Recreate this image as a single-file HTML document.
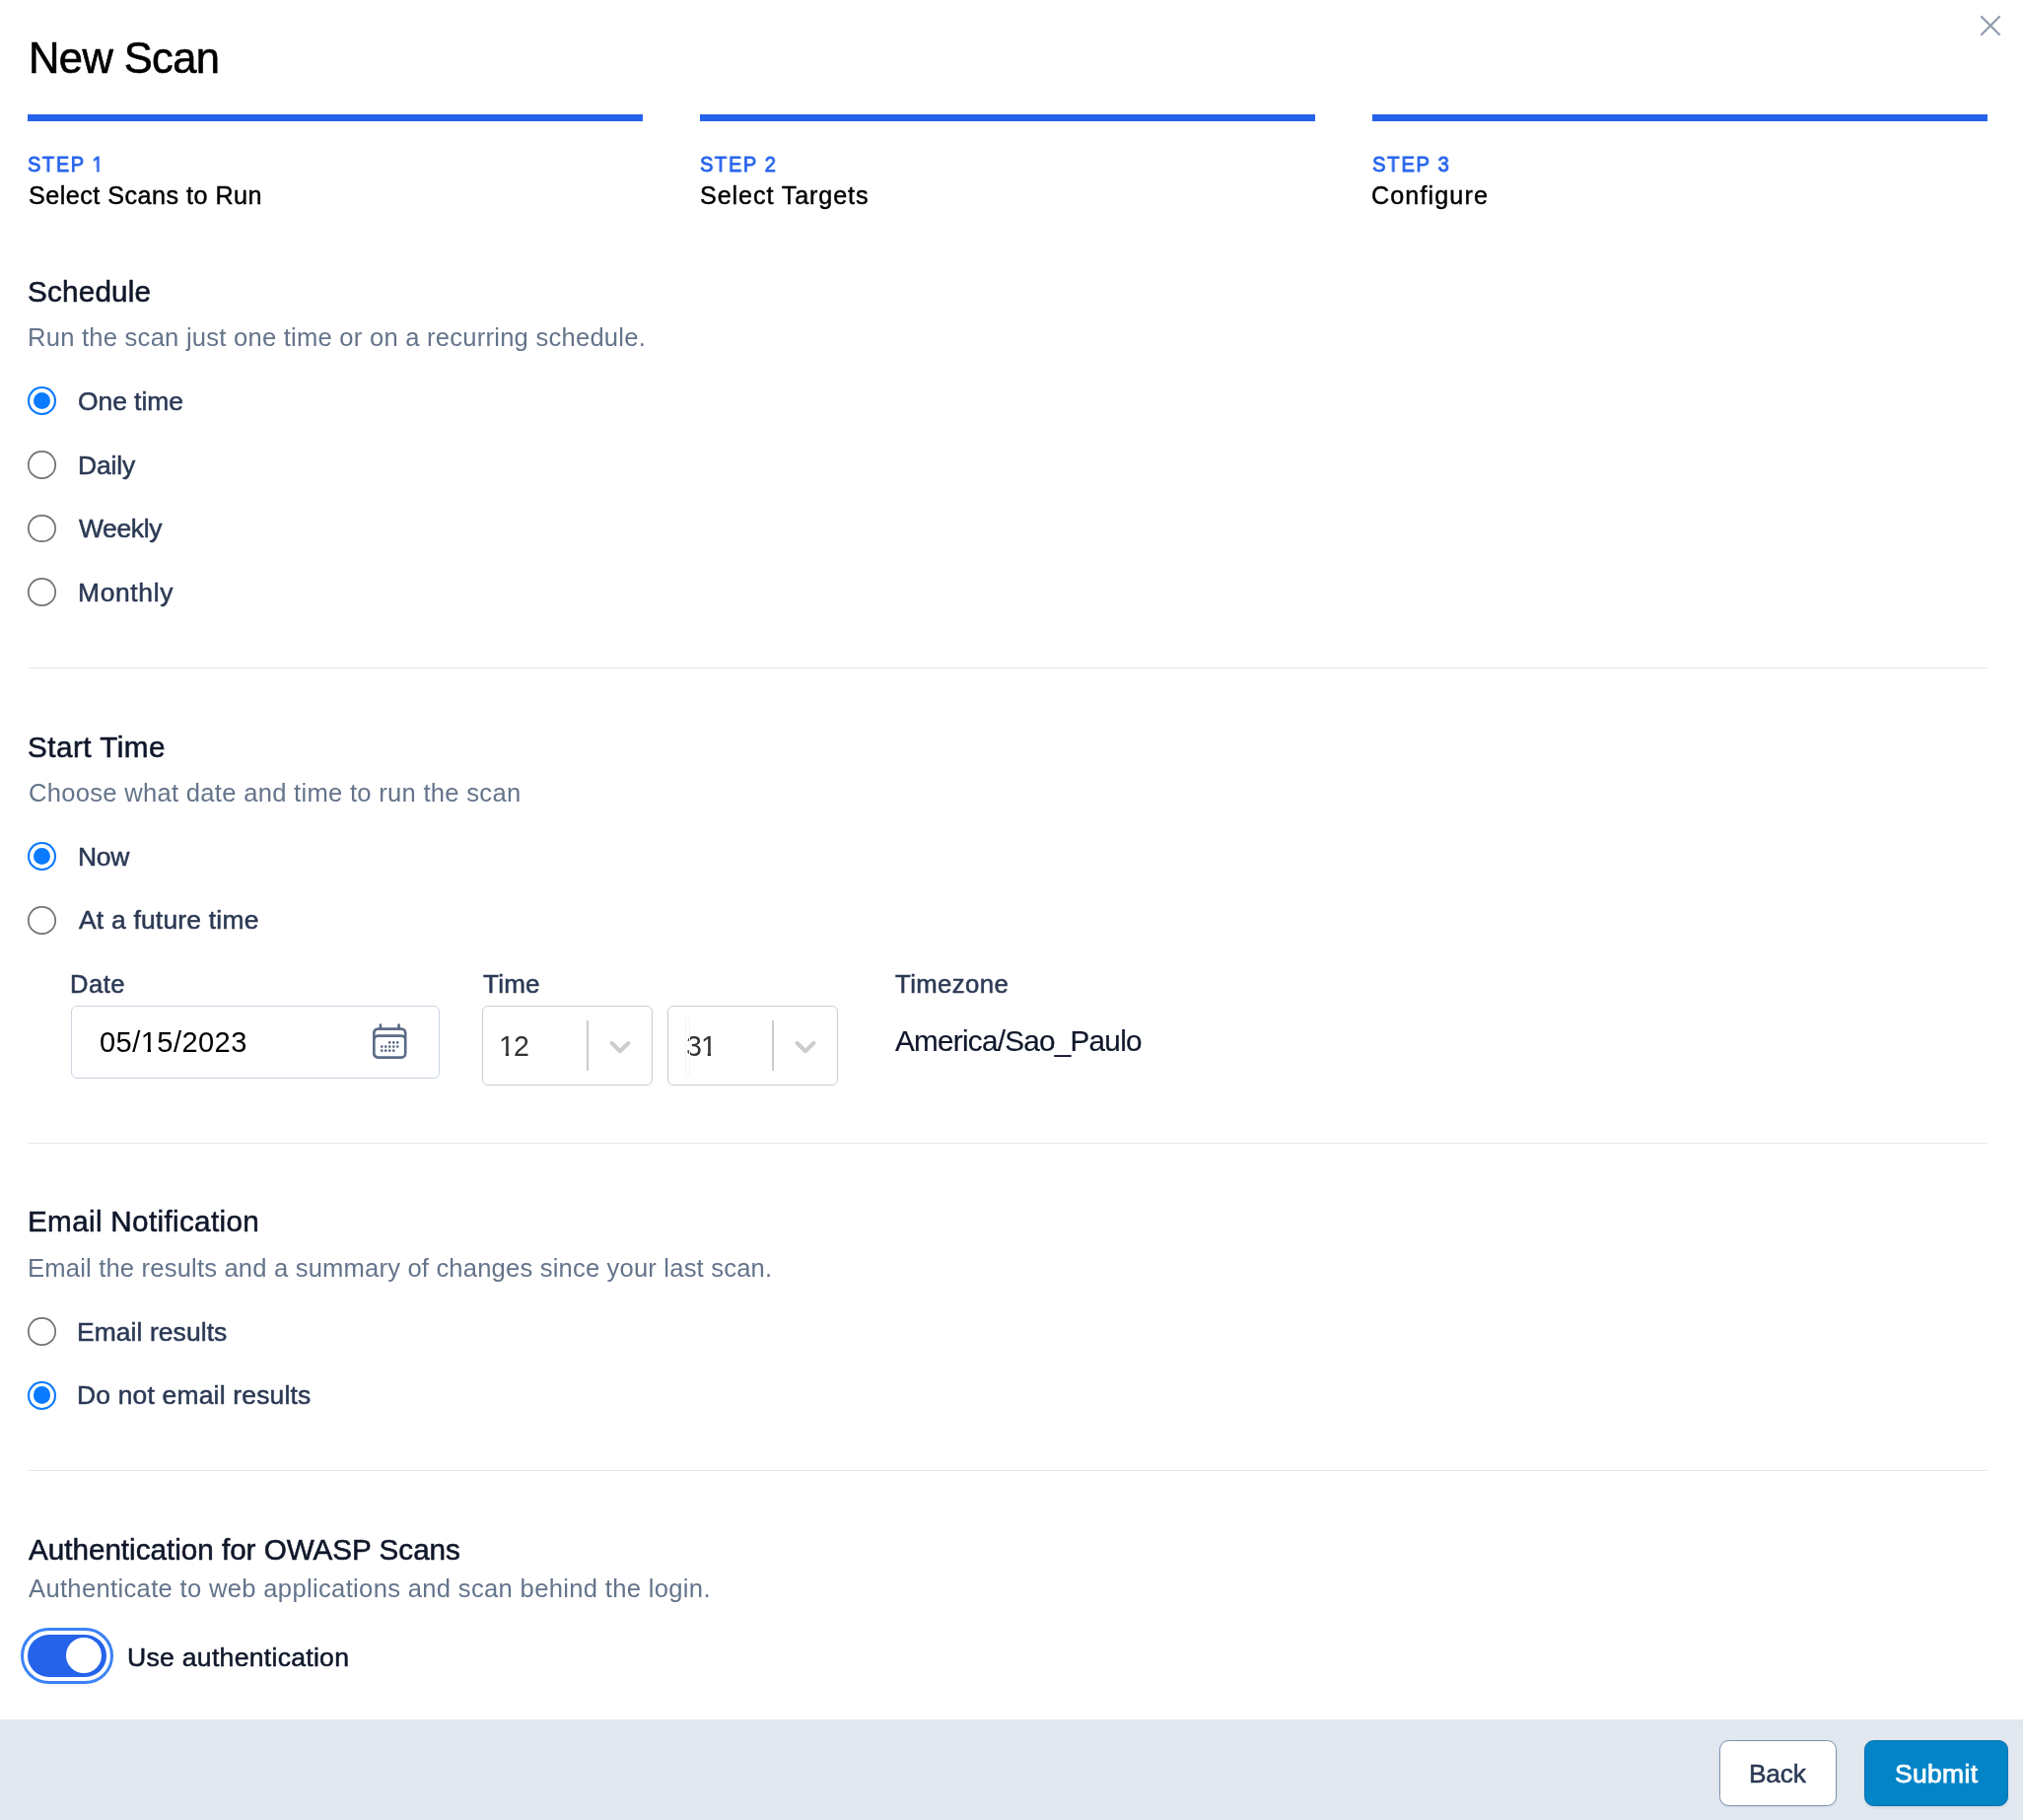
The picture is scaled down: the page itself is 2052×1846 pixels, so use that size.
<!DOCTYPE html>
<html><head><meta charset="utf-8"><title>New Scan</title>
<style>
html,body{margin:0;padding:0;background:#fff;}
body{width:2052px;height:1846px;position:relative;overflow:hidden;font-family:"Liberation Sans",sans-serif;}
.t{position:absolute;white-space:nowrap;will-change:transform;}
.bar{position:absolute;top:116px;height:7px;width:624px;background:#2563EB;}
.hr{position:absolute;left:28px;width:1988px;height:1px;background:#E2E8F0;}
.r{position:absolute;box-sizing:border-box;width:28.7px;height:28.7px;border-radius:50%;box-shadow:inset 0 0 0 1.7px #727272;background:#fff;}
.r.on{box-shadow:inset 0 0 0 2.1px #0A7AFF;}
.r.on::after{content:"";position:absolute;left:5.65px;top:5.65px;width:17.4px;height:17.4px;border-radius:50%;background:#0A7AFF;}
.box{position:absolute;box-sizing:border-box;background:#fff;}
.one{display:inline-block;clip-path:polygon(0 0,100% 0,100% 0.70em,0.354em 0.70em,0.354em 100%,0.237em 100%,0.237em 0.70em,0 0.70em);}
</style></head><body>
<div class="t" style="left:28.51px;top:38.18px;font-size:43.50px;line-height:43.50px;letter-spacing:-0.603px;color:#000;-webkit-text-stroke:0.6px #000;">New Scan</div>
<svg style="position:absolute;left:2007px;top:14px" width="24" height="24" viewBox="0 0 24 24"><path d="M3 3L21 21M21 3L3 21" stroke="#8F9BAD" stroke-width="2.2" stroke-linecap="round" fill="none"/></svg>
<div class="bar" style="left:28px"></div>
<div class="bar" style="left:710px"></div>
<div class="bar" style="left:1392px"></div>
<div class="t" style="left:28.48px;top:155.54px;font-size:21.80px;line-height:21.80px;letter-spacing:1.800px;color:#2563EB;-webkit-text-stroke:0.85px #2563EB;transform:scaleX(0.9156);transform-origin:0 0;">STEP <span class="one">1</span></div>
<div class="t" style="left:28.84px;top:185.51px;font-size:25.15px;line-height:25.15px;letter-spacing:0.485px;color:#000;-webkit-text-stroke:0.45px #000;">Select Scans to Run</div>
<div class="t" style="left:709.71px;top:155.54px;font-size:21.80px;line-height:21.80px;letter-spacing:1.800px;color:#2563EB;-webkit-text-stroke:0.85px #2563EB;transform:scaleX(0.9194);transform-origin:0 0;">STEP 2</div>
<div class="t" style="left:710.08px;top:185.51px;font-size:25.15px;line-height:25.15px;letter-spacing:0.898px;color:#000;-webkit-text-stroke:0.45px #000;">Select Targets</div>
<div class="t" style="left:1392.46px;top:155.54px;font-size:21.80px;line-height:21.80px;letter-spacing:1.800px;color:#2563EB;-webkit-text-stroke:0.85px #2563EB;transform:scaleX(0.9303);transform-origin:0 0;">STEP 3</div>
<div class="t" style="left:1391.47px;top:185.51px;font-size:25.15px;line-height:25.15px;letter-spacing:1.114px;color:#000;-webkit-text-stroke:0.45px #000;">Configure</div>
<div class="t" style="left:28.45px;top:280.90px;font-size:29.65px;line-height:29.65px;letter-spacing:0.210px;color:#0F172A;-webkit-text-stroke:0.55px #0F172A;">Schedule</div>
<div class="t" style="left:28.45px;top:742.90px;font-size:29.65px;line-height:29.65px;letter-spacing:0.492px;color:#0F172A;-webkit-text-stroke:0.55px #0F172A;">Start Time</div>
<div class="t" style="left:27.86px;top:1223.80px;font-size:29.65px;line-height:29.65px;letter-spacing:0.337px;color:#0F172A;-webkit-text-stroke:0.55px #0F172A;">Email Notification</div>
<div class="t" style="left:28.94px;top:1556.60px;font-size:29.65px;line-height:29.65px;letter-spacing:-0.012px;color:#0F172A;-webkit-text-stroke:0.55px #0F172A;">Authentication for OWASP Scans</div>
<div class="t" style="left:28.40px;top:330.14px;font-size:25.58px;line-height:25.58px;letter-spacing:0.238px;color:#64748B;">Run the scan just one time or on a recurring schedule.</div>
<div class="t" style="left:28.72px;top:792.34px;font-size:25.58px;line-height:25.58px;letter-spacing:0.286px;color:#64748B;">Choose what date and time to run the scan</div>
<div class="t" style="left:28.40px;top:1273.94px;font-size:25.58px;line-height:25.58px;letter-spacing:0.183px;color:#64748B;">Email the results and a summary of changes since your last scan.</div>
<div class="t" style="left:29.19px;top:1598.84px;font-size:25.58px;line-height:25.58px;letter-spacing:0.326px;color:#64748B;">Authenticate to web applications and scan behind the login.</div>
<div class="r on" style="left:28px;top:392.15px"></div>
<div class="t" style="left:79.00px;top:393.61px;font-size:26.45px;line-height:26.45px;letter-spacing:-0.057px;color:#2B3954;-webkit-text-stroke:0.5px #2B3954;">One time</div>
<div class="r" style="left:28px;top:456.85px"></div>
<div class="t" style="left:79.08px;top:458.61px;font-size:26.45px;line-height:26.45px;letter-spacing:-0.144px;color:#2B3954;-webkit-text-stroke:0.5px #2B3954;">Daily</div>
<div class="r" style="left:28px;top:521.65px"></div>
<div class="t" style="left:80.13px;top:523.21px;font-size:26.45px;line-height:26.45px;letter-spacing:-0.355px;color:#2B3954;-webkit-text-stroke:0.5px #2B3954;">Weekly</div>
<div class="r" style="left:28px;top:586.45px"></div>
<div class="t" style="left:78.58px;top:587.91px;font-size:26.45px;line-height:26.45px;letter-spacing:0.642px;color:#2B3954;-webkit-text-stroke:0.5px #2B3954;">Monthly</div>
<div class="r on" style="left:28px;top:854.05px"></div>
<div class="t" style="left:78.60px;top:855.51px;font-size:26.45px;line-height:26.45px;letter-spacing:-0.268px;color:#2B3954;-webkit-text-stroke:0.5px #2B3954;">Now</div>
<div class="r" style="left:28px;top:918.85px"></div>
<div class="t" style="left:80.20px;top:920.41px;font-size:26.45px;line-height:26.45px;letter-spacing:0.207px;color:#2B3954;-webkit-text-stroke:0.5px #2B3954;">At a future time</div>
<div class="r" style="left:28px;top:1335.85px"></div>
<div class="t" style="left:78.34px;top:1337.51px;font-size:26.45px;line-height:26.45px;letter-spacing:0.081px;color:#2B3954;-webkit-text-stroke:0.5px #2B3954;">Email results</div>
<div class="r on" style="left:28px;top:1400.85px"></div>
<div class="t" style="left:78.08px;top:1401.71px;font-size:26.45px;line-height:26.45px;letter-spacing:0.191px;color:#2B3954;-webkit-text-stroke:0.5px #2B3954;">Do not email results</div>
<div class="hr" style="top:677px"></div>
<div class="hr" style="top:1159px"></div>
<div class="hr" style="top:1491px"></div>
<div class="t" style="left:71.13px;top:986.04px;font-size:25.58px;line-height:25.58px;letter-spacing:0.480px;color:#2B3954;-webkit-text-stroke:0.5px #2B3954;">Date</div>
<div class="t" style="left:490.19px;top:985.18px;font-size:26.02px;line-height:26.02px;letter-spacing:0.228px;color:#2B3954;-webkit-text-stroke:0.5px #2B3954;">Time</div>
<div class="t" style="left:907.67px;top:986.02px;font-size:25.73px;line-height:25.73px;letter-spacing:0.398px;color:#2B3954;-webkit-text-stroke:0.5px #2B3954;">Timezone</div>
<div class="box" style="left:72px;top:1020px;width:374px;height:74px;border:1px solid #CBD5E1;border-radius:6px"></div>
<div class="t" style="left:101.36px;top:1043.00px;font-size:29.06px;line-height:29.06px;letter-spacing:0.440px;color:#000;">05/<span class="one">1</span>5/2023</div>
<svg style="position:absolute;left:374px;top:1034px" width="42.5" height="44" viewBox="0 0 24 24" preserveAspectRatio="none" fill="none" stroke="#5B6B85" stroke-width="1.5" stroke-linecap="round" stroke-linejoin="round"><path d="M6.75 3v2.25M17.25 3v2.25M3 18.75V7.5a2.25 2.25 0 012.250-2.25h13.5A2.25 2.25 0 0121 7.5v11.25m-18 0A2.25 2.25 0 005.25 21h13.5A2.25 2.25 0 0021 18.75m-18 0v-7.5A2.25 2.25 0 015.25 9h13.5A2.25 2.25 0 0121 11.25v7.5m-9-6h.008v.008H12v-.008zM12 15h.008v.008H12V15zm0 2.25h.008v.008H12v-.008zM9.75 15h.008v.008H9.75V15zm0 2.25h.008v.008H9.75v-.008zM7.5 15h.008v.008H7.5V15zm0 2.25h.008v.008H7.5v-.008zm6.75-4.5h.008v.008h-.008v-.008zm0 2.25h.008v.008h-.008V15zm0 2.25h.008v.008h-.008v-.008zm2.25-4.5h.008v.008H16.5v-.008zm0 2.25h.008v.008H16.5V15z"/></svg>
<div class="box" style="left:489px;top:1020px;width:172.5px;height:81px;border:1px solid #CCCCCC;border-radius:6px"></div>
<div class="t" style="left:506.26px;top:1047.09px;font-size:28.60px;line-height:28.60px;letter-spacing:-1.000px;color:#333333;"><span class="one">1</span>2</div>
<div style="position:absolute;left:594.5px;top:1035px;width:2px;height:51px;background:#CCCCCC"></div>
<svg style="position:absolute;left:611px;top:1043px" width="36" height="36" viewBox="0 0 20 20"><path fill="#CCCCCC" d="M4.516 7.548c0.436-0.446 1.043-0.481 1.576 0l3.908 3.747 3.908-3.747c0.533-0.481 1.141-0.446 1.574 0 0.436 0.445 0.408 1.197 0 1.615-0.406 0.418-4.695 4.502-4.695 4.502-0.217 0.223-0.502 0.335-0.787 0.335s-0.57-0.112-0.789-0.335c0 0-4.287-4.084-4.695-4.502s-0.436-1.17 0-1.615z"/></svg>
<div class="box" style="left:677px;top:1020px;width:172.5px;height:81px;border:1px solid #CCCCCC;border-radius:6px"></div>
<div class="t" style="left:696.15px;top:1047.09px;font-size:28.60px;line-height:28.60px;letter-spacing:-1.000px;color:#333333;">3<span class="one">1</span></div>
<div style="position:absolute;left:782.5px;top:1035px;width:2px;height:51px;background:#CCCCCC"></div>
<svg style="position:absolute;left:799px;top:1043px" width="36" height="36" viewBox="0 0 20 20"><path fill="#CCCCCC" d="M4.516 7.548c0.436-0.446 1.043-0.481 1.576 0l3.908 3.747 3.908-3.747c0.533-0.481 1.141-0.446 1.574 0 0.436 0.445 0.408 1.197 0 1.615-0.406 0.418-4.695 4.502-4.695 4.502-0.217 0.223-0.502 0.335-0.787 0.335s-0.57-0.112-0.789-0.335c0 0-4.287-4.084-4.695-4.502s-0.436-1.17 0-1.615z"/></svg>
<div style="position:absolute;left:694.5px;top:1031px;width:5px;height:60px;box-sizing:border-box;border:1px solid #F4F4F4;border-radius:3px"></div>
<div class="t" style="left:908.04px;top:1040.70px;font-size:29.65px;line-height:29.65px;letter-spacing:-0.718px;color:#0F172A;-webkit-text-stroke:0.2px #0F172A;">America/Sao_Paulo</div>
<div style="position:absolute;left:21px;top:1651px;width:94px;height:57px;box-sizing:border-box;border-radius:29px;border:3.5px solid #3B82F6;background:#fff"></div>
<div style="position:absolute;left:28px;top:1658px;width:80px;height:43px;border-radius:22px;background:#2563EB"></div>
<div style="position:absolute;left:67px;top:1661px;width:36px;height:36px;border-radius:50%;background:#fff"></div>
<div class="t" style="left:128.96px;top:1667.58px;font-size:26.60px;line-height:26.60px;letter-spacing:0.276px;color:#0F172A;-webkit-text-stroke:0.5px #0F172A;">Use authentication</div>
<div style="position:absolute;left:0;top:1744px;width:2052px;height:102px;background:#E2E8F0"></div>
<div class="box" style="left:1744px;top:1765px;width:119px;height:67px;border:1px solid #8291A8;border-radius:9.5px;box-shadow:0 1px 3px rgba(96,165,250,0.18)"></div>
<div class="t" style="left:1773.83px;top:1785.83px;font-size:26.31px;line-height:26.31px;letter-spacing:-0.203px;color:#2B3954;-webkit-text-stroke:0.5px #2B3954;">Back</div>
<div class="box" style="left:1891px;top:1765px;width:146px;height:67px;background:#0284C7;border:1px solid #0873B0;border-radius:9.5px;box-shadow:0 2px 3px rgba(15,23,42,0.08)"></div>
<div class="t" style="left:1921.67px;top:1785.81px;font-size:26.45px;line-height:26.45px;letter-spacing:0.358px;color:#fff;-webkit-text-stroke:0.75px #fff;">Submit</div>
<script>(function(){var w=window.innerWidth;if(w&&Math.abs(w-2052)>2){document.documentElement.style.zoom=(w/2052);}})();</script>
</body></html>
